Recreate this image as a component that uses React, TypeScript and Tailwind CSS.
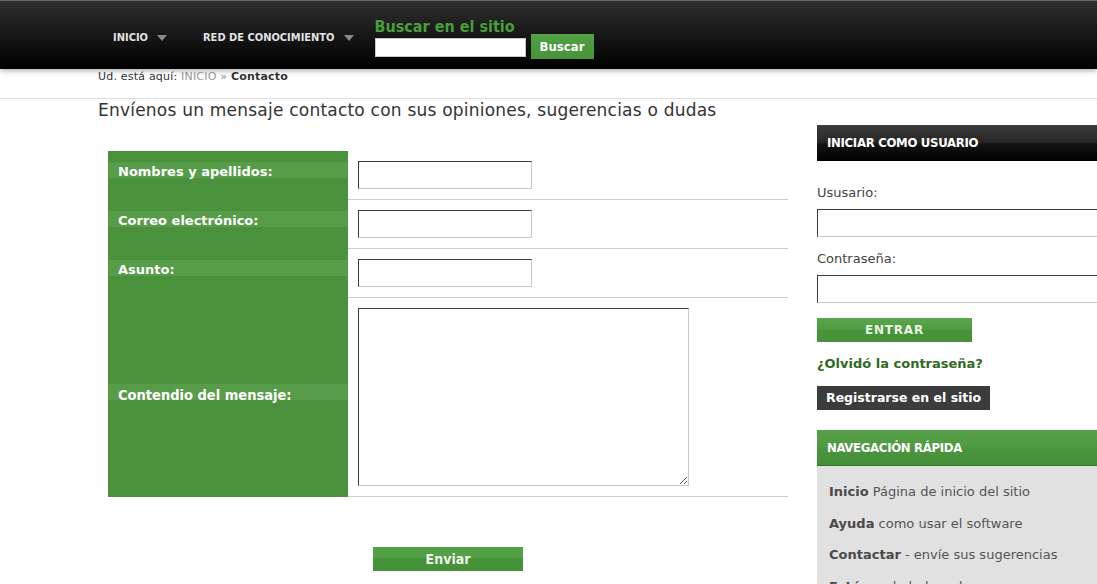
import React from "react";

const verdana = "font-['DejaVu_Sans',Verdana,sans-serif]";
const tahoma = "font-['DejaVu_Sans_Condensed',Tahoma,sans-serif]";
const narrow = "font-['Liberation_Sans_Narrow','DejaVu_Sans_Condensed',sans-serif]";

function Arrow() {
  return (
    <span className="inline-block w-0 h-0 border-l-[5.5px] border-r-[5.5px] border-t-[6px] border-l-transparent border-r-transparent border-t-[#8a8a8a]" />
  );
}

function FormRow({ label, children, tall, cond }: { label: string; children: React.ReactNode; tall?: boolean; cond?: boolean }) {
  return (
    <div className={`flex ${tall ? "h-[199px]" : "h-[49px]"}`}>
      <div className="w-[240px] bg-[#4a913c] flex flex-col justify-center">
        <div
          className={`mb-[8px] h-[20px] pl-[10px] bg-[linear-gradient(to_bottom,#579c49_0px,#579c49_16px,transparent_16px)] text-white font-bold ${
            cond ? `${narrow} text-[14.5px] leading-[22px]` : `${verdana} text-[13px] leading-[20px]`
          }`}
        >
          {label}
        </div>
      </div>
      <div className="flex-1 border-b border-[#cfcfcf] pl-[10px] pt-[10px]">{children}</div>
    </div>
  );
}

const inputCls =
  "block bg-white border border-t-[#3a3a3a] border-l-[#3a3a3a] border-r-[#c8c8c8] border-b-[#c8c8c8] outline-none";

export default function App() {
  return (
    <div className={`w-[1097px] h-[584px] overflow-hidden bg-white ${verdana}`}>
      {/* Top bar */}
      <header className="relative z-10 h-[69px] border-t border-[#666] bg-[linear-gradient(to_bottom,#2e2e2e,#000)] shadow-[0_2px_5px_rgba(0,0,0,0.3)] flex">
        <nav className={`flex items-start pl-[113px] pt-[31px] ${narrow} text-[11px] font-bold text-[#e2e2e2] leading-[12px]`}>
          <div className="flex items-center gap-[9px]">
            <span>INICIO</span>
            <Arrow />
          </div>
          <div className="flex items-center gap-[9px] ml-[36px]">
            <span>RED DE CONOCIMIENTO</span>
            <Arrow />
          </div>
        </nav>
        <div className="flex items-end gap-[5px] pt-[16px] ml-[21px] self-start">
          <div className="flex flex-col pb-[2px]">
            <div className={`${tahoma} text-[16px] leading-[19px] text-[#4a9e3c] font-bold`}>Buscar en el sitio</div>
            <input className="mt-[2px] w-[151px] h-[19px] bg-white border border-[#c8c8c8] outline-none" />
          </div>
          <button className={`w-[63px] h-[25px] bg-[linear-gradient(to_bottom,#55a346_0%,#4b993d_50%,#47933a_100%)] text-white ${tahoma} font-bold text-[13px]`}>
            Buscar
          </button>
        </div>
      </header>

      {/* Breadcrumb */}
      <div className="h-[30px] border-b border-[#dedede] pl-[98px] pt-[1px] text-[11px] leading-[14px] tracking-[0.2px] text-[#333]">
        Ud. está aquí: <span className="text-[#9a9a9a]">INICIO</span> <span className="text-[#888]">»</span>{" "}
        <span className="font-bold">Contacto</span>
      </div>

      {/* Main */}
      <div className="flex pl-[98px]">
        <main className="w-[719px] shrink-0">
          <h1 className="text-[17px] leading-[22px] tracking-[0.22px] text-[#333]">
            Envíenos un mensaje contacto con sus opiniones, sugerencias o dudas
          </h1>
          <div className="ml-[10px] mt-[30px] w-[680px]">
            <FormRow label="Nombres y apellidos:">
              <input className={`${inputCls} w-[174px] h-[28px]`} />
            </FormRow>
            <FormRow label="Correo electrónico:">
              <input className={`${inputCls} w-[174px] h-[28px]`} />
            </FormRow>
            <FormRow label="Asunto:">
              <input className={`${inputCls} w-[174px] h-[28px]`} />
            </FormRow>
            <FormRow label="Contendio del mensaje:" tall cond>
              <textarea className={`${inputCls} w-[331px] h-[178px]`} />
            </FormRow>
            <div className="flex justify-center mt-[50px]">
              <button
                className={`w-[150px] h-[24px] bg-[linear-gradient(to_bottom,#55a047_0%,#52a044_45%,#46923a_50%,#46923a_100%)] text-[#eef7ea] font-bold ${narrow} text-[14px] leading-[24px]`}
              >
                Enviar
              </button>
            </div>
          </div>
        </main>

        <aside className="w-[300px] shrink-0 mt-[26px]">
          <div className={`h-[36px] pl-[10px] bg-[linear-gradient(to_bottom,#3c3c3c_0%,#262626_48%,#141414_52%,#000_100%)] text-white font-bold text-[13px] leading-[36px] tracking-[-0.3px] ${tahoma}`}>
            INICIAR COMO USUARIO
          </div>
          <div className="mt-[24px] text-[13px] leading-[16px] text-[#444]">Ususario:</div>
          <input className={`${inputCls} mt-[8px] w-[300px] h-[28px]`} />
          <div className="mt-[14px] text-[13px] leading-[16px] text-[#444]">Contraseña:</div>
          <input className={`${inputCls} mt-[8px] w-[300px] h-[28px]`} />
          <button className="mt-[15px] block w-[155px] h-[24px] bg-[linear-gradient(to_bottom,#5aa64b_0%,#4e9b40_50%,#47933a_52%,#47933a_100%)] text-[#eaf5e6] font-bold text-[12px] tracking-[0.8px] leading-[24px]">
            ENTRAR
          </button>
          <div className="mt-[14px] text-[13px] leading-[16px] font-bold text-[#2f6a24]">¿Olvidó la contraseña?</div>
          <div className="mt-[14px] inline-block h-[24px] px-[9px] bg-[#3c3c3c] text-white font-bold text-[12.5px] leading-[24px]">
            Registrarse en el sitio
          </div>
          <div className={`mt-[20px] h-[36px] pl-[10px] border-b border-[#3b6e31] bg-[linear-gradient(to_bottom,#56a148_0%,#4f9b42_45%,#4a943d_55%,#45903a_100%)] text-white font-bold text-[13px] leading-[35px] tracking-[-0.3px] ${tahoma}`}>
            NAVEGACIÓN RÁPIDA
          </div>
          <div className="bg-[#e1e1e1] pt-[10px] pl-[12px] h-[200px] text-[13px] leading-[31.5px] text-[#555]">
            <div>
              <span className="font-bold text-[#4a4a4a]">Inicio</span> Página de inicio del sitio
            </div>
            <div>
              <span className="font-bold text-[#4a4a4a]">Ayuda</span> como usar el software
            </div>
            <div>
              <span className="font-bold text-[#4a4a4a]">Contactar</span> - envíe sus sugerencias
            </div>
            <div>
              <span className="font-bold text-[#4a4a4a]">Estás</span> en la lada web
            </div>
          </div>
        </aside>
      </div>
    </div>
  );
}
